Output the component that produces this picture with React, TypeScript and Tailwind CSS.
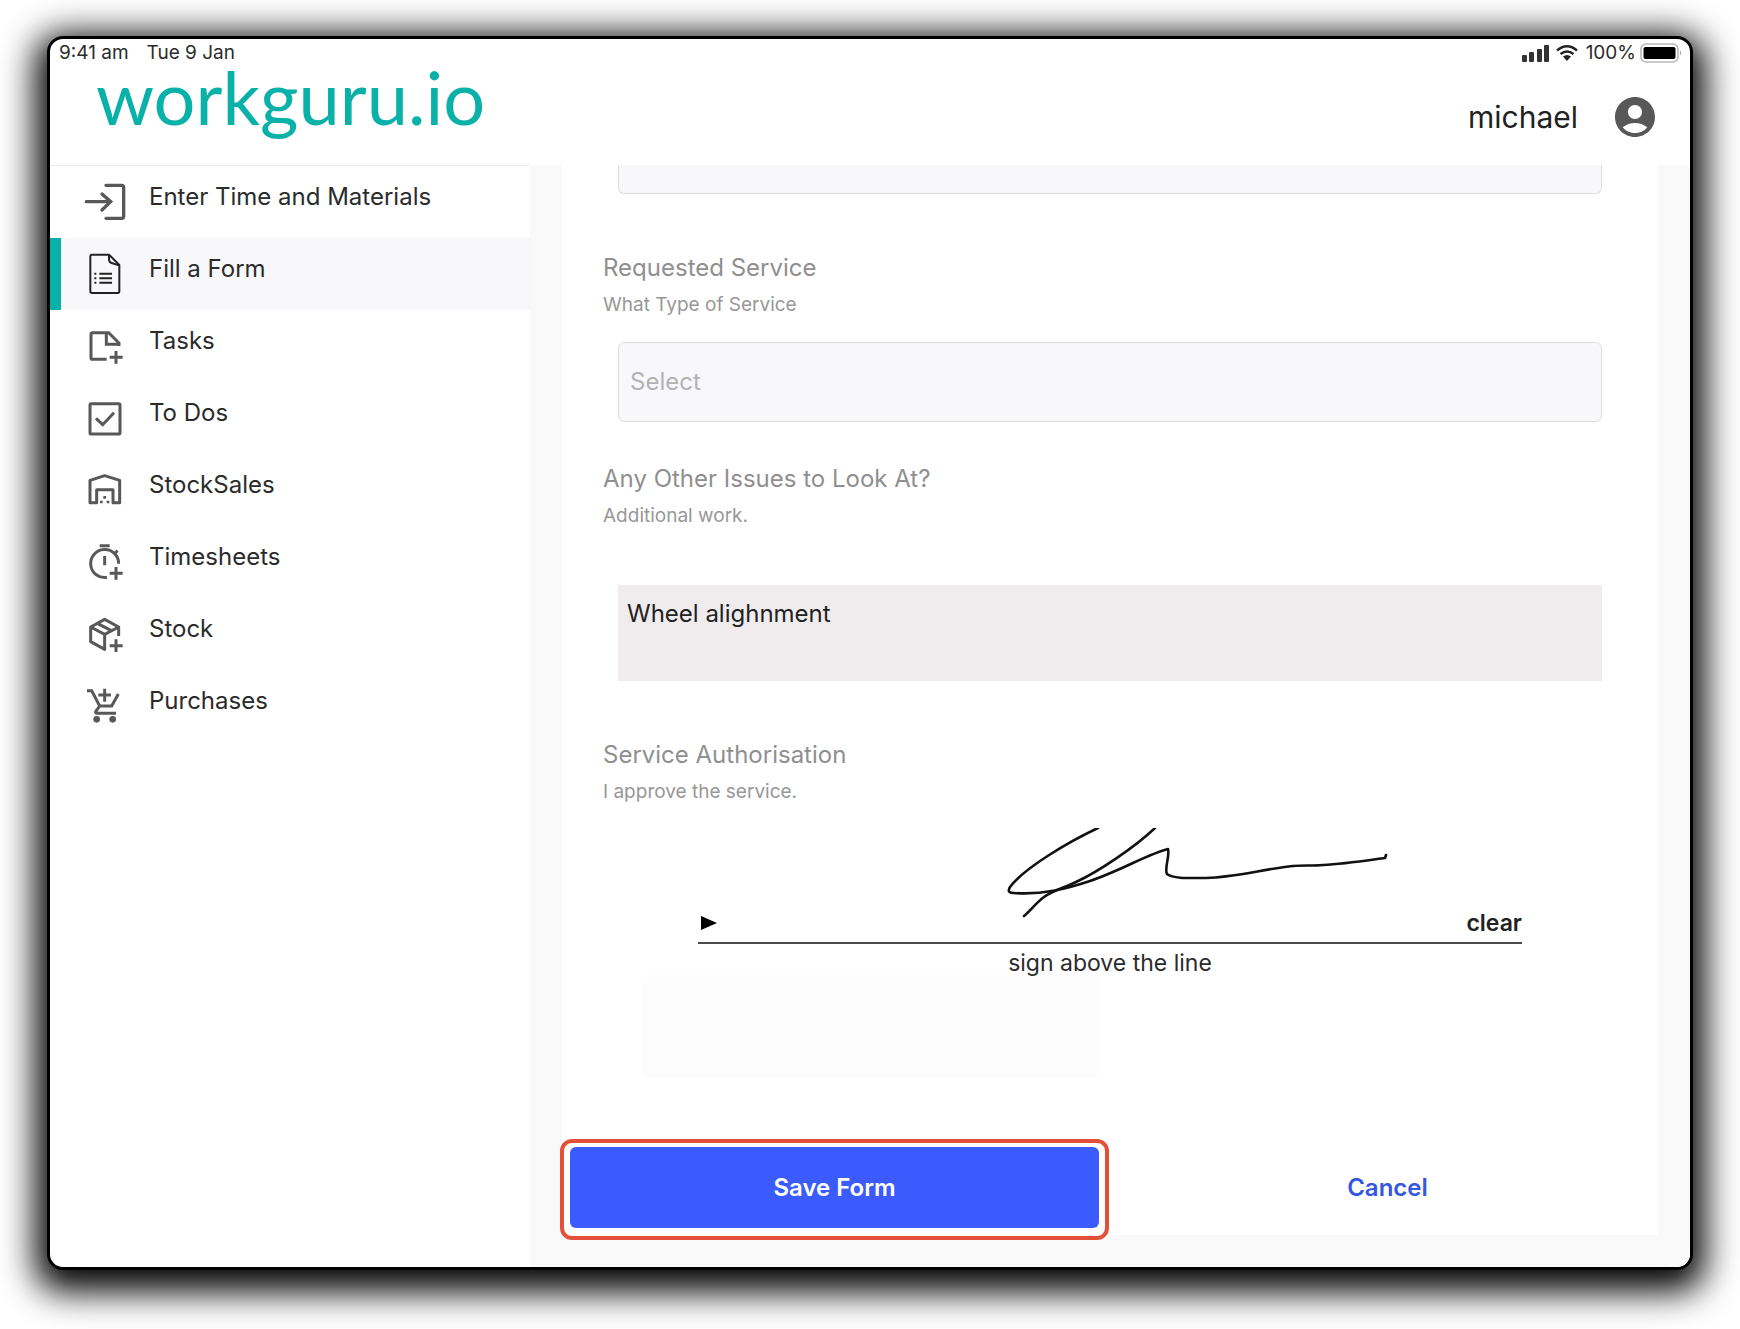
import type { ReactNode } from "react";
import { MdAccountCircle } from "react-icons/md";

function NavIcon({ children, dark, weight = 9 }: { children: ReactNode; dark?: boolean; weight?: number }) {
  return (
    <svg
      viewBox="0 0 126 126"
      className={`size-[42px] shrink-0 ${dark ? "text-[#222222]" : "text-[#585858]"}`}
      fill="none"
      stroke="currentColor"
      strokeWidth={weight}
      aria-hidden="true"
    >
      {children}
    </svg>
  );
}

const navItems: { label: string; active?: boolean; icon: ReactNode }[] = [
  {
    label: "Enter Time and Materials",
    icon: (
      <NavIcon weight={10}>
        <path strokeLinecap="round" d="M66 13H113Q119 13 119 19V106Q119 112 113 112H66M7 62H80M54 39L80 62L54 87" />
      </NavIcon>
    ),
  },
  {
    label: "Fill a Form",
    active: true,
    icon: (
      <NavIcon dark weight={6}>
        <path d="M24 5H75L106 36V115Q106 120 101 120H24Q19 120 19 115V10Q19 5 24 5Z" />
        <path d="M75 6V21Q76 28 83 30L105 37" />
        <path d="M31 62H37M31 76H37M31 89H37M46 62H84M46 76H84M46 89H84" />
      </NavIcon>
    ),
  },
  {
    label: "Tasks",
    icon: (
      <NavIcon>
        <path d="M68 103H26Q21 103 21 98V28Q21 23 26 23H74L105 54V63M67 24V58H104M96 78V116M77 97H116" />
      </NavIcon>
    ),
  },
  {
    label: "To Dos",
    icon: (
      <NavIcon>
        <rect x="18" y="20" width="90" height="91" rx="4" />
        <path d="M36 64L56 83L90 47" />
      </NavIcon>
    ),
  },
  {
    label: "StockSales",
    icon: (
      <NavIcon>
        <path strokeLinejoin="round" d="M18 34L62 20L107 34V101H87V62H38V101H18Z" />
        <path strokeWidth="8" d="M58 85H66M48 99H56M68 99H76" />
      </NavIcon>
    ),
  },
  {
    label: "Timesheets",
    icon: (
      <NavIcon>
        <path d="M47 14H77M62 45V73M90 39L101 29M104 68A42 42 0 1 0 69 109M96 78V116M77 97H116" />
      </NavIcon>
    ),
  },
  {
    label: "Stock",
    icon: (
      <NavIcon>
        <path strokeLinejoin="round" d="M104 69V42L62 19L20 42V86L62 109V64M20 42L62 64L104 42M40 31L82 53" />
        <path d="M96 79V117M77 98H116" />
      </NavIcon>
    ),
  },
  {
    label: "Purchases",
    icon: (
      <NavIcon>
        <path d="M9 17H23L47 63H83L103 27M47 63L35 80Q34 85 39 85H96M62 11V50M43 30H81" />
        <circle cx="38" cy="103" r="10" fill="currentColor" stroke="none" />
        <circle cx="86" cy="103" r="10" fill="currentColor" stroke="none" />
      </NavIcon>
    ),
  },
];

function StatusBar() {
  return (
    <div className="flex h-7 items-center pr-2 pl-[9px] text-[19px] leading-7 text-[#2b2b2b]">
      <span>9:41 am</span>
      <span className="ml-[18px]">Tue 9 Jan</span>
      <svg viewBox="0 0 27 17" className="ml-auto h-[17px] w-[27px]" fill="#333333" aria-hidden="true">
        <rect x="0" y="10" width="5" height="7" rx="1" />
        <rect x="7" y="7" width="5" height="10" rx="1" />
        <rect x="15" y="4" width="5" height="13" rx="1" />
        <rect x="22" y="0" width="5" height="17" rx="1" />
      </svg>
      <svg viewBox="0 0 22 16" className="ml-[7px] h-4 w-[22px]" fill="none" stroke="#222222" strokeWidth="2.4" aria-hidden="true">
        <path d="M1 5.5Q11 -2.8 21 5.5M4.5 9Q11 3.8 17.5 9" />
        <path d="M7 11.6Q11 8.6 15 11.6L11 16Z" fill="#222222" stroke="none" />
      </svg>
      <span className="ml-2">100%</span>
      <svg viewBox="0 0 42 20" className="ml-1 h-5 w-[42px]" fill="none" aria-hidden="true">
        <rect x="1" y="1" width="37" height="18" rx="5" stroke="#b9b9b9" strokeWidth="1.6" />
        <rect x="3.5" y="4" width="32" height="12" rx="2" fill="#000000" />
        <path d="M40 7.5Q42 10 40 12.5Z" fill="#999999" />
      </svg>
    </div>
  );
}

function FieldHeading({ title, hint, htmlFor }: { title: string; hint: string; htmlFor?: string }) {
  return (
    <div className="flex flex-col gap-[9px] pl-[41px]">
      <label htmlFor={htmlFor} className="text-[24px] leading-8 text-[#8f8f8f]">
        {title}
      </label>
      <p className="text-[19px] leading-6 text-[#979797]">{hint}</p>
    </div>
  );
}

function Signature() {
  return (
    <svg
      viewBox="0 0 390 92"
      className="h-[92px] w-[390px]"
      fill="none"
      stroke="#111111"
      strokeWidth="2.6"
      strokeLinecap="round"
      strokeLinejoin="round"
      role="img"
      aria-label="Signature"
    >
      <path d="M98 0C70 13 24 40 10 59C7 64 10 65 14 65C42 67 66 61 90 53C120 43 150 25 168 21C170 28 164 41 167 46C174 51 190 50 206 50C236 49 264 41 293 38C303 37 312 38 323 37C345 36 370 32 385 30L386 27" />
      <path d="M155 0C135 19 98 44 76 54C66 59 52 63 44 69C37 74 30 83 24 88" />
    </svg>
  );
}

export default function App() {
  return (
    <div className="flex min-h-screen bg-white px-[47px] pt-9 pb-[59px] font-['Inter','Liberation_Sans',sans-serif]">
      <div className="flex flex-1 flex-col overflow-hidden rounded-[16px] border-3 border-black bg-white shadow-[0_10px_34px_12px_rgba(0,0,0,0.98)]">
        <header className="flex h-[126px] shrink-0 flex-col">
          <StatusBar />
          <div className="flex flex-1 items-start justify-between pr-[31px] pl-[46px]">
            <a href="#home" className="font-['Lato',sans-serif] text-[74px] leading-[60px] text-[#0ab1a8]">
              workguru.io
            </a>
            <div className="mt-[26px] flex items-center gap-[33px]">
              <span className="text-[30px] leading-10 text-[#222222]">michael</span>
              <button type="button" aria-label="Account">
                <MdAccountCircle className="size-12 text-[#585858]" />
              </button>
            </div>
          </div>
        </header>

        <div className="flex flex-1">
          <nav className="w-[480px] shrink-0 border-t border-[#ececec]">
            <ul>
              {navItems.map((item) => (
                <li key={item.label}>
                  <a
                    href="#menu"
                    aria-current={item.active ? "page" : undefined}
                    className={`flex h-[72px] items-center gap-[23px] border-l-[11px] pl-[23px] ${
                      item.active ? "border-[#0ab1a8] bg-[#f8f8fa]" : "border-transparent"
                    }`}
                  >
                    {item.icon}
                    <span className="pb-[10px] text-[24px] leading-8 text-[#2b2b2b]">{item.label}</span>
                  </a>
                </li>
              ))}
            </ul>
          </nav>

          <main className="flex flex-1 bg-[#f9f9f9] px-8 pb-8">
            <form className="relative flex flex-1 flex-col bg-white" onSubmit={(e) => e.preventDefault()}>
              <input
                type="text"
                aria-label="Previous answer"
                className="mx-14 h-[29px] rounded-b-md border border-t-0 border-[#dededf] bg-[#f8f8fa]"
              />

              <div className="mt-[58px]">
                <FieldHeading title="Requested Service" hint="What Type of Service" htmlFor="service" />
              </div>
              <select
                id="service"
                className="mx-14 mt-[25px] h-20 appearance-none rounded-md border border-[#dededf] bg-[#f8f8fa] px-[11px] text-[24px] text-[#b3b3b5]"
              >
                <option>Select</option>
              </select>

              <div className="mt-[41px]">
                <FieldHeading title="Any Other Issues to Look At?" hint="Additional work." htmlFor="issues" />
              </div>
              <textarea
                id="issues"
                defaultValue="Wheel alighnment"
                className="mx-14 mt-[57px] h-24 resize-none bg-[#f0ecee] px-[9px] py-[13px] text-[24px] leading-8 text-[#222222]"
              />

              <div className="mt-[58px]">
                <FieldHeading title="Service Authorisation" hint="I approve the service." />
              </div>
              <div className="absolute top-[809px] left-20 h-[104px] w-[458px] rounded-lg bg-[#fdfdfd]" />
              <div className="relative mx-[136px] mt-6">
                <div className="relative flex h-[116px] items-start justify-end border-b-2 border-[#4a4a4a] pr-[132px]">
                  <Signature />
                  <div className="absolute inset-x-0 bottom-[3px] flex items-center justify-between">
                    <svg viewBox="0 0 16 14" className="ml-[3px] h-[14px] w-4" fill="#000000" aria-hidden="true">
                      <path d="M0 0L16 7L0 14Z" />
                    </svg>
                    <button type="button" className="text-[23px] leading-8 font-semibold text-[#222222]">
                      clear
                    </button>
                  </div>
                </div>
                <p className="mt-[3px] text-center text-[23px] leading-8 text-[#2b2b2b]">sign above the line</p>
              </div>

              <div className="mt-auto -mb-[5px] -ml-0.5 grid grid-cols-2 items-center">
                <div className="rounded-xl border-4 border-[#e5503b] bg-white px-1.5 pt-1 pb-2">
                  <button type="submit" className="h-[81px] w-full rounded-md bg-[#3b5bff] text-[24px] font-semibold text-white">
                    Save Form
                  </button>
                </div>
                <button type="button" className="mb-1 ml-2 h-[81px] text-[24px] font-semibold text-[#3657e0]">
                  Cancel
                </button>
              </div>
            </form>
          </main>
        </div>
      </div>
    </div>
  );
}
